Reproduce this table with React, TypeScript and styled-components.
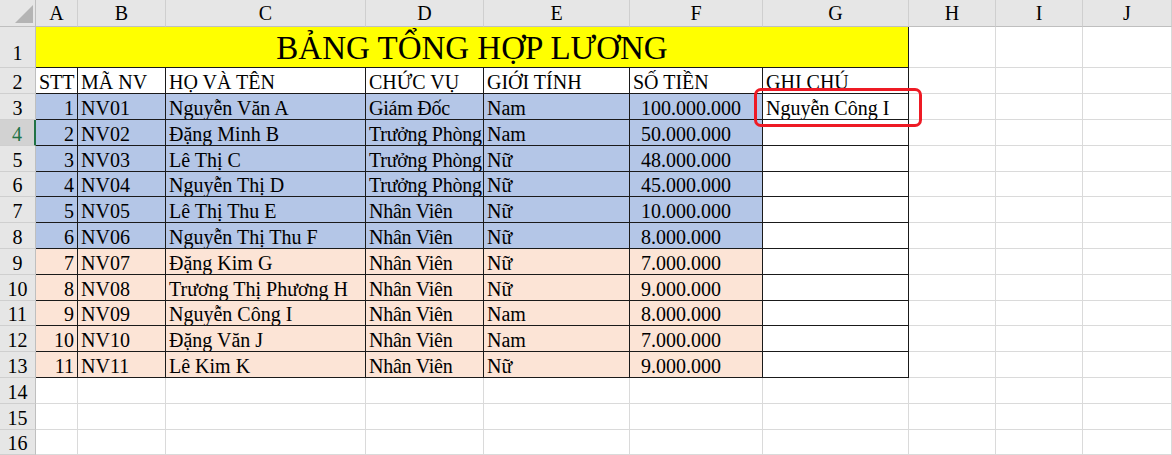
import React from "react";
import styled, { createGlobalStyle, css } from "styled-components";

const Global = createGlobalStyle`
  html, body { margin: 0; padding: 0; background: #ffffff; }
  body { width: 1172px; height: 455px; overflow: hidden; }
  * { box-sizing: border-box; }
`;

const GRID = "#dadada";
const LINE = "#1a1a1a";
const BLUE = "#b4c6e7";
const PEACH = "#fce4d6";

const Sheet = styled.div`
  position: relative;
  width: 1172px;
  height: 455px;
  overflow: hidden;
  display: grid;
  grid-template-columns: 36px 42px 88px 200px 118px 146px 133px 146px 87px 87px 1fr;
  grid-template-rows: 27px 41.3px 26px repeat(14, 25.8px);
  font-family: "Liberation Serif", "Times New Roman", serif;
  font-size: 20px;
  color: #000;
`;

const Corner = styled.div`
  position: relative;
  background: #e6e6e6;
  border-right: 1px solid #bfbfbf;
  border-bottom: 1px solid #bfbfbf;
`;

const CornerMark = styled.svg`
  position: absolute;
  left: 14px;
  top: 5px;
`;

const ColHead = styled.div`
  background: #e6e6e6;
  border-right: 1px solid #cfcfcf;
  border-bottom: 1px solid #bfbfbf;
  display: flex;
  align-items: center;
  justify-content: center;
  line-height: 22px;
`;

const RowHead = styled.div<{ $active?: boolean; $tall?: boolean }>`
  background: ${(p) => (p.$active ? "#d2d2d2" : "#e6e6e6")};
  color: ${(p) => (p.$active ? "#217346" : "#000")};
  border-right: ${(p) => (p.$active ? "2px solid #217346" : "1px solid #bfbfbf")};
  border-bottom: 1px solid #cfcfcf;
  display: flex;
  align-items: flex-end;
  justify-content: center;
  line-height: 22px;
  padding-bottom: ${(p) => (p.$tall ? "3px" : "0px")};
`;

type Align = "left" | "right";

const Cell = styled.div<{
  $bg?: string;
  $table?: boolean;
  $align?: Align;
  $indent?: number;
  $tight?: boolean;
}>`
  background: ${(p) => p.$bg || "#ffffff"};
  border-right: 1px solid ${(p) => (p.$table ? LINE : GRID)};
  border-bottom: 1px solid ${(p) => (p.$table ? LINE : GRID)};
  display: flex;
  align-items: flex-end;
  justify-content: ${(p) => (p.$align === "right" ? "flex-end" : "flex-start")};
  ${(p) =>
    p.$align === "right"
      ? css`padding-right: 3px;`
      : css`padding-left: ${p.$indent ?? 3}px;`}
  letter-spacing: ${(p) => (p.$tight ? "-0.25px" : "normal")};
  line-height: 22px;
  white-space: nowrap;
  overflow: hidden;
`;

const TitleCell = styled.div`
  grid-column: 2 / span 7;
  background: #ffff00;
  border-right: 1px solid ${LINE};
  border-bottom: 1px solid ${LINE};
  display: flex;
  align-items: flex-end;
  justify-content: center;
  font-size: 33px;
  line-height: 34px;
  padding-bottom: 2px;
  white-space: nowrap;
`;

const Highlight = styled.div`
  position: absolute;
  left: 754px;
  top: 88px;
  width: 168px;
  height: 39px;
  border: 3.5px solid #ee1a24;
  border-radius: 7px;
  pointer-events: none;
`;

const letters = ["A", "B", "C", "D", "E", "F", "G", "H", "I", "J"];

const headers = ["STT", "MÃ NV", "HỌ VÀ TÊN", "CHỨC VỤ", "GIỚI TÍNH", "SỐ TIỀN", "GHI CHÚ"];

const data: (string | number)[][] = [
  [1, "NV01", "Nguyễn Văn A", "Giám Đốc", "Nam", "100.000.000", "Nguyễn Công I"],
  [2, "NV02", "Đặng Minh B", "Trưởng Phòng", "Nam", "50.000.000", ""],
  [3, "NV03", "Lê Thị C", "Trưởng Phòng", "Nữ", "48.000.000", ""],
  [4, "NV04", "Nguyễn Thị D", "Trưởng Phòng", "Nữ", "45.000.000", ""],
  [5, "NV05", "Lê Thị Thu E", "Nhân Viên", "Nữ", "10.000.000", ""],
  [6, "NV06", "Nguyễn Thị Thu F", "Nhân Viên", "Nữ", "8.000.000", ""],
  [7, "NV07", "Đặng Kim G", "Nhân Viên", "Nữ", "7.000.000", ""],
  [8, "NV08", "Trương Thị Phương H", "Nhân Viên", "Nữ", "9.000.000", ""],
  [9, "NV09", "Nguyễn Công I", "Nhân Viên", "Nam", "8.000.000", ""],
  [10, "NV10", "Đặng Văn J", "Nhân Viên", "Nam", "7.000.000", ""],
  [11, "NV11", "Lê Kim K", "Nhân Viên", "Nữ", "9.000.000", ""],
];

const EmptyCols = ({ count }: { count: number }) => (
  <>
    {Array.from({ length: count }).map((_, i) => (
      <Cell key={i} />
    ))}
  </>
);

export default function App() {
  return (
    <>
      <Global />
      <Sheet>
        <Corner>
          <CornerMark width="19" height="19" viewBox="0 0 19 19">
            <polygon points="19,0 19,18 1,18" fill="#b4b4b4" />
          </CornerMark>
        </Corner>
        {letters.map((l) => (
          <ColHead key={l}>{l}</ColHead>
        ))}

        <RowHead $tall>1</RowHead>
        <TitleCell>BẢNG TỔNG HỢP LƯƠNG</TitleCell>
        <EmptyCols count={3} />

        <RowHead>2</RowHead>
        {headers.map((h, i) => (
          <Cell key={i} $table>
            {h}
          </Cell>
        ))}
        <EmptyCols count={3} />

        {data.map((row, r) => {
          const bg = r < 6 ? BLUE : PEACH;
          return (
            <React.Fragment key={r}>
              <RowHead $active={r === 1}>{r + 3}</RowHead>
              {row.map((v, c) => (
                <Cell
                  key={c}
                  $table
                  $bg={c < 6 ? bg : "#ffffff"}
                  $align={c === 0 ? "right" : "left"}
                  $indent={c === 5 ? 11 : 3}
                  $tight={c === 3}
                >
                  {v}
                </Cell>
              ))}
              <EmptyCols count={3} />
            </React.Fragment>
          );
        })}

        {[14, 15, 16].map((n) => (
          <React.Fragment key={n}>
            <RowHead>{n}</RowHead>
            <EmptyCols count={10} />
          </React.Fragment>
        ))}

        <Highlight />
      </Sheet>
    </>
  );
}
